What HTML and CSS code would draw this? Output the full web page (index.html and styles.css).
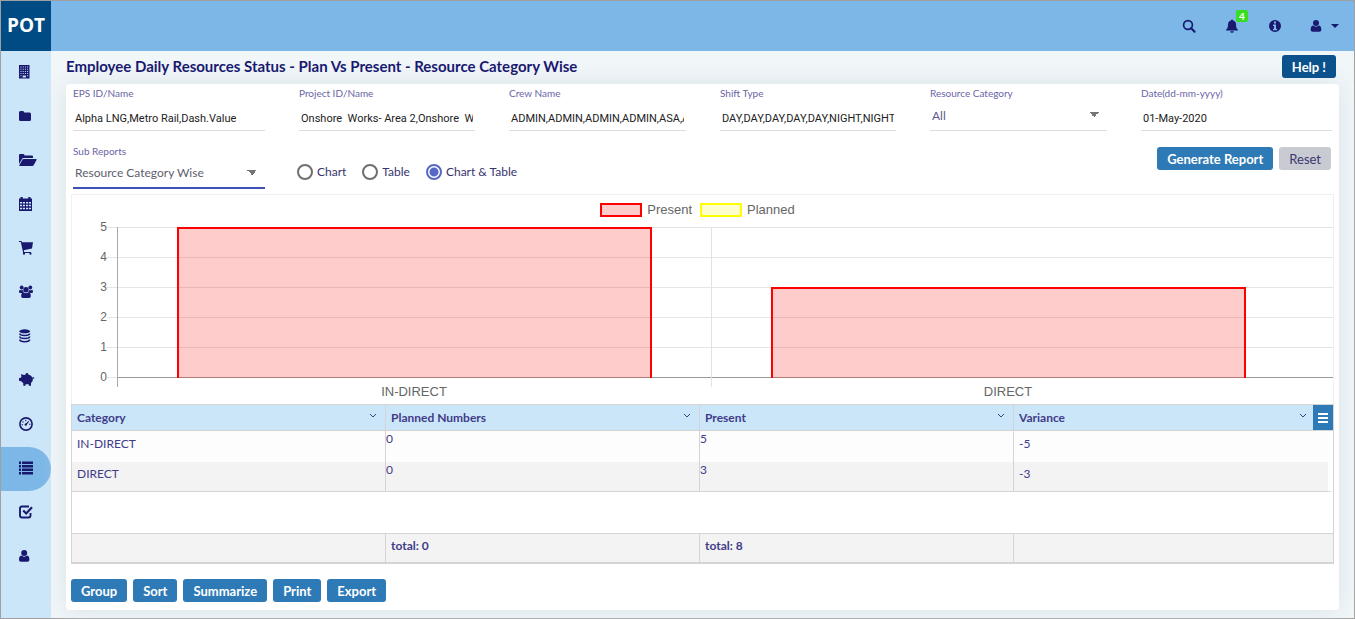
FILE: index.html
```html
<!DOCTYPE html>
<html lang="en">
<head>
<meta charset="utf-8">
<title>Employee Daily Resources Status</title>
<link rel="stylesheet" href="styles.css">
</head>
<body>
<div class="app">
  <header class="topbar">
    <a class="brand" href="#">POT</a>
    <div class="tools">
      <button class="tool" aria-label="Search"><svg viewBox="0 0 14 14"><circle cx="6" cy="6" r="4.4" fill="none" stroke="currentColor" stroke-width="1.7"/><path d="M9 9l3.600 3.800" stroke="currentColor" stroke-width="2" stroke-linecap="round"/></svg></button>
      <button class="tool" aria-label="Notifications"><svg viewBox="0 0 14 14"><path d="M7 .5a1 1 0 0 1 1 1c2 .4 3 2 3 4 0 3 .8 4.300 2 5.300v.7H1v-.7c1.200-1 2-2.300 2-5.300 0-2 1-3.600 3-4a1 1 0 0 1 1-1zM5.200 12.200h3.600a1.800 1.500 0 0 1-3.600 0z"/></svg><span class="badge">4</span></button>
      <button class="tool" aria-label="Information"><svg viewBox="0 0 14 14"><path fill-rule="evenodd" d="M7 1a6 6 0 1 0 0 12A6 6 0 0 0 7 1zM6 2.500h2v2H6zM5 5.500h3v4.200h1v1.500H5V9.700h1V7H5z"/></svg></button>
      <button class="tool account" aria-label="Account"><svg viewBox="0 0 14 14"><circle cx="7" cy="4" r="3"/><path d="M4 6.500c1.800 1.500 4.200 1.500 6 0 1.600.3 2.300 2 2.300 4 0 1.500-.7 2.200-2 2.200H3.700c-1.300 0-2-.7-2-2.200 0-2 .7-3.700 2.300-4z"/></svg><svg class="caret" viewBox="0 0 8 4"><path d="M0 0h8L4 4z"/></svg></button>
    </div>
  </header>
  <nav class="sidebar" aria-label="Main">
    <a href="#" aria-label="Companies"><svg viewBox="0 0 14 14"><path fill-rule="evenodd" d="M0 0h10.500v13.500H0zM1.500 1.500v1h1v-1zm2.200 0v1h1v-1zm2.200 0v1h1v-1zm2.200 0v1h1v-1zM1.500 3.700v1h1v-1zm2.200 0v1h1v-1zm2.200 0v1h1v-1zm2.200 0v1h1v-1zM1.500 5.900v1h1v-1zm2.200 0v1h1v-1zm2.200 0v1h1v-1zm2.200 0v1h1v-1zM1.500 8.100v1h1v-1zm2.200 0v1h1v-1zm2.200 0v1h1v-1zm2.200 0v1h1v-1zM1.500 10.300v1h1v-1zm6.600 0v1h1v-1zM3.700 10.500v2h3.200v-2z"/></svg></a>
    <a href="#" aria-label="Projects"><svg viewBox="0 0 14 14"><path d="M0 3.500Q0 2 1.500 2H4q1 0 1.200 1.500h5.500Q12 3.500 12 5v5.500q0 1.500-1.500 1.500h-9Q0 12 0 10.500z"/></svg></a>
    <a href="#" aria-label="Open projects"><svg class="wide" viewBox="0 0 18 14"><path d="M0 11V2q0-1 1-1h3.500q1 0 1 1.500H13q1 0 1 1V5H4.500Q3.500 5 3 6zM4.500 6H17q1 0 .5 1l-2.700 5q-.5 1-1.500 1H.8q-.8 0-.4-1l3-5.200Q3.700 6 4.500 6z"/></svg></a>
    <a href="#" aria-label="Calendar"><svg viewBox="0 0 14 14"><path fill-rule="evenodd" d="M0 1.500h1.500V0h2.200v1.500h5.600V0h2.200v1.500H13V14H0zM1 5v1.400h2.100V5zm2.900 0v1.400H6V5zM7 5v1.400h2.100V5zm2.900 0v1.400H12V5zM1 7.700v1.500h2.100V7.700zm2.900 0v1.500H6V7.700zm3.100 0v1.500h2.100V7.700zm2.900 0v1.500H12V7.700zM1 10.700v1.500h2.100v-1.500zm2.900 0v1.500H6v-1.500zm3.100 0v1.500h2.100v-1.500zm2.900 0v1.500H12v-1.500z"/></svg></a>
    <a href="#" aria-label="Procurement"><svg viewBox="0 0 14 14"><path d="M0 0h2.500L3 1.200h11L13 7.500 4.800 9.200l.4 1.800H12v1H4.200L1.800 1H0z"/><circle cx="5" cy="12.700" r="1.100"/><circle cx="11.500" cy="12.700" r="1.100"/></svg></a>
    <a href="#" aria-label="Resources"><svg viewBox="0 0 14 14"><circle cx="2.700" cy="2.500" r="1.900"/><circle cx="11.300" cy="2.500" r="1.900"/><circle cx="7" cy="4.700" r="2.700"/><path d="M.8 4.800Q2.400 5.800 3.800 5q.2 1.500 1 2.300Q3.400 7.600 3 8H1.300Q0 8 0 7q0-2 .8-2.200zM13.200 4.800q-1.600 1-3 .2-.2 1.500-1 2.300 1.400.3 1.800.7h1.700Q14 8 14 7q0-2-.8-2.200zM4.500 7.300Q7 9 9.500 7.300q2.300 0 2.300 4 0 1.700-1.700 1.700H3.900q-1.700 0-1.700-1.700 0-4 2.300-4z"/></svg></a>
    <a href="#" aria-label="Database"><svg viewBox="0 0 14 14"><ellipse cx="5.700" cy="2.300" rx="5.500" ry="2"/><g fill="none" stroke="currentColor" stroke-width="1.600"><path d="M.8 4.500q0 2 4.900 2t4.900-2M.8 7.500q0 2 4.900 2t4.900-2M.8 10.500q0 2.200 4.900 2.200t4.900-2.200"/></g></svg></a>
    <a href="#" aria-label="Budget"><svg class="pig" viewBox="0 0 16 14"><path fill-rule="evenodd" d="M1 5q.7 0 1.500-1.500L1.800 1.300q2 0 3 .8 4-1.400 7.200.6l1.500 2 1-.8q1.300.5.700 1.600h-1.300q.3 3-1.900 4.600v2.600H9.800v-1.400H6.500v1.400H4.300v-2.500L2.200 8.300Q.3 8.200 0 7.500V5z"/><circle cx="8" cy="1.300" r="1.300"/></svg></a>
    <a href="#" aria-label="Dashboard"><svg viewBox="0 0 14 14"><circle cx="7" cy="7" r="6.100" fill="none" stroke="currentColor" stroke-width="1.600"/><path d="M6.300 7L9.500 4l.6.600L7.500 8z"/><circle cx="6.800" cy="7.600" r="1.200"/><circle cx="4" cy="5" r=".7"/><circle cx="6.700" cy="3.500" r=".7"/><circle cx="3.200" cy="7.700" r=".7"/><circle cx="10.800" cy="7.300" r=".7"/></svg></a>
    <a class="active" href="#" aria-label="Reports" aria-current="page"><svg viewBox="0 0 14 14"><path d="M0 .5h2V3H0zm3 0h11V3H3zM0 4h2v2.500H0zm3 0h11v2.500H3zM0 7.500h2V10H0zm3 0h11V10H3zM0 11h2v2.500H0zm3 0h11v2.500H3z"/></svg></a>
    <a href="#" aria-label="Approvals"><svg viewBox="0 0 14 14"><path d="M10 1.500H3q-2 0-2 2v7q0 2 2 2h6.500q2 0 2-2V8" fill="none" stroke="currentColor" stroke-width="1.900"/><path d="M4.200 5.500L7.200 8.500 13 2.300" fill="none" stroke="currentColor" stroke-width="2.200"/></svg></a>
    <a href="#" aria-label="Profile"><svg viewBox="0 0 14 14"><circle cx="5.200" cy="4" r="3"/><path d="M2.300 6.500c1.800 1.500 4 1.500 5.800 0 1.600.3 2.300 2 2.300 4 0 1.500-.7 2.200-2 2.200H2c-1.300 0-2-.7-2-2.200 0-2 .7-3.700 2.300-4z"/></svg></a>
  </nav>
  <main class="content">
    <div class="heading"><h1>Employee Daily Resources Status - Plan Vs Present - Resource Category Wise</h1><button class="btn help">Help !</button></div>
    <section class="card">
      <form class="filters">
        <div class="field"><label for="eps">EPS ID/Name</label><input id="eps" type="text" value="Alpha LNG,Metro Rail,Dash.Value"></div>
        <div class="field"><label for="project">Project ID/Name</label><input id="project" type="text" value="Onshore  Works- Area 2,Onshore  Works"></div>
        <div class="field"><label for="crew">Crew Name</label><input id="crew" type="text" value="ADMIN,ADMIN,ADMIN,ADMIN,ASA,ASA"></div>
        <div class="field"><label for="shift">Shift Type</label><input id="shift" type="text" value="DAY,DAY,DAY,DAY,DAY,NIGHT,NIGHT"></div>
        <div class="field"><label for="category">Resource Category</label><select id="category"><option>All</option></select></div>
        <div class="field"><label for="date">Date(dd-mm-yyyy)</label><input id="date" type="text" value="01-May-2020"></div>
        <div class="field sub"><label for="report">Sub Reports</label><select id="report"><option>Resource Category Wise</option></select></div>
        <div class="views">
          <label><input type="radio" name="view">Chart</label>
          <label><input type="radio" name="view">Table</label>
          <label><input type="radio" name="view" checked>Chart &amp; Table</label>
        </div>
        <div class="actions"><button type="button" class="btn">Generate Report</button><button type="button" class="btn reset">Reset</button></div>
      </form>
      <div class="report">
        <div class="chart">
          <div class="legend"><span class="key present"></span><span>Present</span><span class="key planned"></span><span>Planned</span></div>
          <div class="plot">
            <div class="scale"><span>5</span><span>4</span><span>3</span><span>2</span><span>1</span><span>0</span></div>
            <div class="bars">
              <div class="slot"><div class="bar" style="height:100%"></div></div>
              <div class="slot"><div class="bar" style="height:60%"></div></div>
              <div class="rest"></div>
            </div>
          </div>
          <div class="names"><span>IN-DIRECT</span><span>DIRECT</span></div>
        </div>
        <table>
          <colgroup><col class="data"><col class="data"><col class="data"><col></colgroup>
          <thead><tr>
            <th scope="col"><div>Category<svg viewBox="0 0 8 6"><path d="M1 1l3 3 3-3"/></svg></div></th>
            <th scope="col"><div>Planned Numbers<svg viewBox="0 0 8 6"><path d="M1 1l3 3 3-3"/></svg></div></th>
            <th scope="col"><div>Present<svg viewBox="0 0 8 6"><path d="M1 1l3 3 3-3"/></svg></div></th>
            <th scope="col" class="last"><div>Variance<svg viewBox="0 0 8 6"><path d="M1 1l3 3 3-3"/></svg><button class="menu" aria-label="Grid menu"><i></i><i></i><i></i></button></div></th>
          </tr></thead>
          <tbody>
            <tr><td>IN-DIRECT</td><td class="num">0</td><td class="num">5</td><td>-5</td></tr>
            <tr><td>DIRECT</td><td class="num">0</td><td class="num">3</td><td>-3</td></tr>
            <tr class="blank"><td colspan="4"></td></tr>
          </tbody>
          <tfoot><tr><td></td><td>total: 0</td><td>total: 8</td><td></td></tr></tfoot>
        </table>
      </div>
      <div class="commands"><button class="btn">Group</button><button class="btn">Sort</button><button class="btn">Summarize</button><button class="btn">Print</button><button class="btn">Export</button></div>
    </section>
  </main>
</div>
</body>
</html>
```
FILE: styles.css
```css
* { box-sizing: border-box; }
body { margin: 0; color: #191970; font: 12px/18px Lato, sans-serif; }
button, input, select { font: inherit; color: inherit; margin: 0; }
button { border: 0; cursor: pointer; }
svg { display: block; fill: currentColor; }

.app { display: grid; grid-template: 50px 1fr / 50px 1fr; min-height: 100vh; border: 1px solid #a0a0a0; }
.topbar { grid-column: 1 / 3; display: flex; justify-content: space-between; align-items: center; background: #7cb7e8; }
.brand { display: flex; width: 50px; height: 50px; align-items: center; justify-content: center; background: #004b84; color: #fff; font: 700 19px/24px "Open Sans", sans-serif; text-decoration: none; padding-bottom: 3px; }
.tools { display: flex; gap: 29px; padding: 0 15px 0 0; }
.tool { position: relative; display: flex; align-items: center; gap: 8px; padding: 0; background: none; }
.tool svg { width: 14px; height: 14px; }
.tool .caret { width: 8px; height: 4px; }
.tool.account { margin-left: -2px; }
.badge { position: absolute; left: 11px; top: -9px; width: 12px; height: 12px; border-radius: 2px; background: #38dd20; color: #fff; font: 700 10px/12px Lato, sans-serif; text-align: center; }

.sidebar { background: #cce6f9; }
.sidebar a { display: flex; align-items: center; height: 44px; padding: 0 0 2px 18px; color: #191970; }
.sidebar svg { width: 14px; height: 14px; }
.sidebar svg.wide { width: 18px; }
.sidebar svg.pig { width: 16px; }
.sidebar .active { background: #7cb7e8; border-radius: 0 22px 22px 0; }

.content { background: #f1f6f9; padding: 4px 15px 8px; min-width: 0; }
.heading { display: flex; align-items: flex-start; justify-content: space-between; padding-right: 3px; height: 29px; }
h1 { margin: 0; font: 700 15px/22px Lato, sans-serif; }
.btn { height: 23px; padding: 0 10px; border-radius: 3px; background: #2e7ab6; color: #fff; font: 700 13px/22px Lato, sans-serif; }
.help { background: #0b528d; }
.card { background: #fff; border-radius: 4px; padding: 2px 5px 8px; box-shadow: 0 0 24px #d9e2e6; }
.filters { display: grid; grid-template-columns: 192px 176px 177px 176px 177px 1fr; column-gap: 34px; padding: 0 2px 4px; row-gap: 11px; }
.field { display: flex; flex-direction: column; min-width: 0; height: 47px; gap: 1px; }
.field label { font-size: 10px; line-height: 14px; color: #6a65a6; }
.field input { width: 100%; height: 30px; padding: 5px 2px 0; border: 0; border-bottom: 1px solid #dcdcdc; background: none; font: 11px/18px Roboto, sans-serif; color: #222; outline: 0; }
.field select { appearance: none; width: 100%; height: 30px; padding: 3px 2px; border: 0; border-bottom: 1px solid #dcdcdc; color: #5c5a94; outline: 0; background: linear-gradient(to bottom right, #757575 50%, transparent 50%) right 8px top 11px / 5px 5px no-repeat, linear-gradient(to bottom left, #757575 50%, transparent 50%) right 13px top 11px / 5px 5px no-repeat; }
.field.sub { height: 46px; }
.field.sub select { border-bottom: 2px solid #3f51b5; color: #5e5e6e; }
.views { grid-column: 2 / 4; display: flex; gap: 16px; align-items: center; height: 42px; padding-top: 14px; margin-left: -2px; }
.views label { display: flex; align-items: center; gap: 4px; color: #37356f; }
.views input { appearance: none; width: 16px; height: 16px; border: 2px solid #6f6f6f; border-radius: 50%; }
.views input:checked { border-color: #5768c4; background: radial-gradient(circle, #5768c4 4px, #fff 5px); }
.actions { grid-column: 4 / 7; display: flex; justify-content: flex-end; gap: 6px; padding: 3px 1px 0 0; }
.reset { background: #c8cbd1; color: #3b3873; font-weight: 400; }

.chart { border: 1px solid #f0f0f0; border-bottom: 0; font: 12px/16px "Liberation Sans", Arial, sans-serif; color: #666; height: 210px; padding-top: 7px; }
.legend { display: flex; align-items: center; justify-content: center; gap: 5px; height: 16px; padding-right: 10px; font-size: 13px; }
.key { width: 42px; height: 14px; border: 2px solid #f00; background: #fcc; }
.key.planned { border-color: #ff0; background: #ffc; margin-left: 3px; }
.plot { display: flex; margin-top: 9px; }
.scale { width: 35px; height: 166px; margin-top: -8px; display: flex; flex-direction: column; justify-content: space-between; text-align: right; }
.scale span { height: 16px; }
.bars { flex: 1; display: flex; height: 160px; padding-left: 10px; background: repeating-linear-gradient(#e5e5e5 0 1px, transparent 1px 30px) 0 0 / 100% 151px no-repeat; }
.slot { flex: 1; height: 160px; padding-bottom: 9px; display: flex; align-items: flex-end; justify-content: center; border-left: 1px solid #e2e2e2; background: linear-gradient(#999, #999) 0 150px / 100% 1px no-repeat; }
.slot:first-child { border-left-color: #aaa; }
.rest { width: 28px; background: linear-gradient(#999, #999) 0 150px / 100% 1px no-repeat; }
.bar { width: 80%; border: 2px solid #f00; border-bottom: 0; background: rgba(255, 0, 0, .2); }
.names { display: flex; padding: 0 28px 0 45px; margin-top: -3px; font-size: 13px; }
.names span { flex: 1; text-align: center; }

table { width: 100%; border-collapse: separate; border-spacing: 0; table-layout: fixed; border: 1px solid #d4d4d4; border-bottom-width: 2px; color: #403c88; }
.data { width: 314px; }
th, td { padding: 0 5px; text-align: left; border-right: 1px solid #d4d4d4; }
th:last-child, tfoot td:last-child { border-right: 0; }
th { height: 26px; background: #cce6f9; border-bottom: 1px solid #d4d4d4; }
th div { display: flex; align-items: center; justify-content: space-between; }
th svg { width: 8px; height: 6px; fill: none; stroke: #403c88; margin: 0 3px 3px 0; }
.menu { width: 20px; height: 25px; background: #2e7ab6; display: flex; flex-direction: column; gap: 2px; align-items: center; justify-content: center; padding: 0; }
.menu i { width: 10px; height: 2px; background: #fff; }
th.last { padding-right: 0; }
.last svg { margin-left: auto; margin-right: 6px; }
tbody td { height: 30px; padding-bottom: 5px; background: #fdfdfd; }
tbody tr:nth-child(2) td { background: #f3f3f3; border-bottom: 1px solid #d4d4d4; }
tbody td:last-child { border-right: 5px solid #fff; }
tbody tr:first-child td { height: 31px; }
tbody tr:nth-child(2) td:last-child { border-right-color: #fff; }
td.num { padding: 0; vertical-align: top; line-height: 16px; }
tbody .blank td { height: 41px; background: #fff; }
tfoot td { height: 29px; padding-bottom: 4px; background: #f3f3f3; border-top: 1px solid #d4d4d4; font-weight: 700; }
.commands { display: flex; gap: 6px; margin-top: 15px; }
```
